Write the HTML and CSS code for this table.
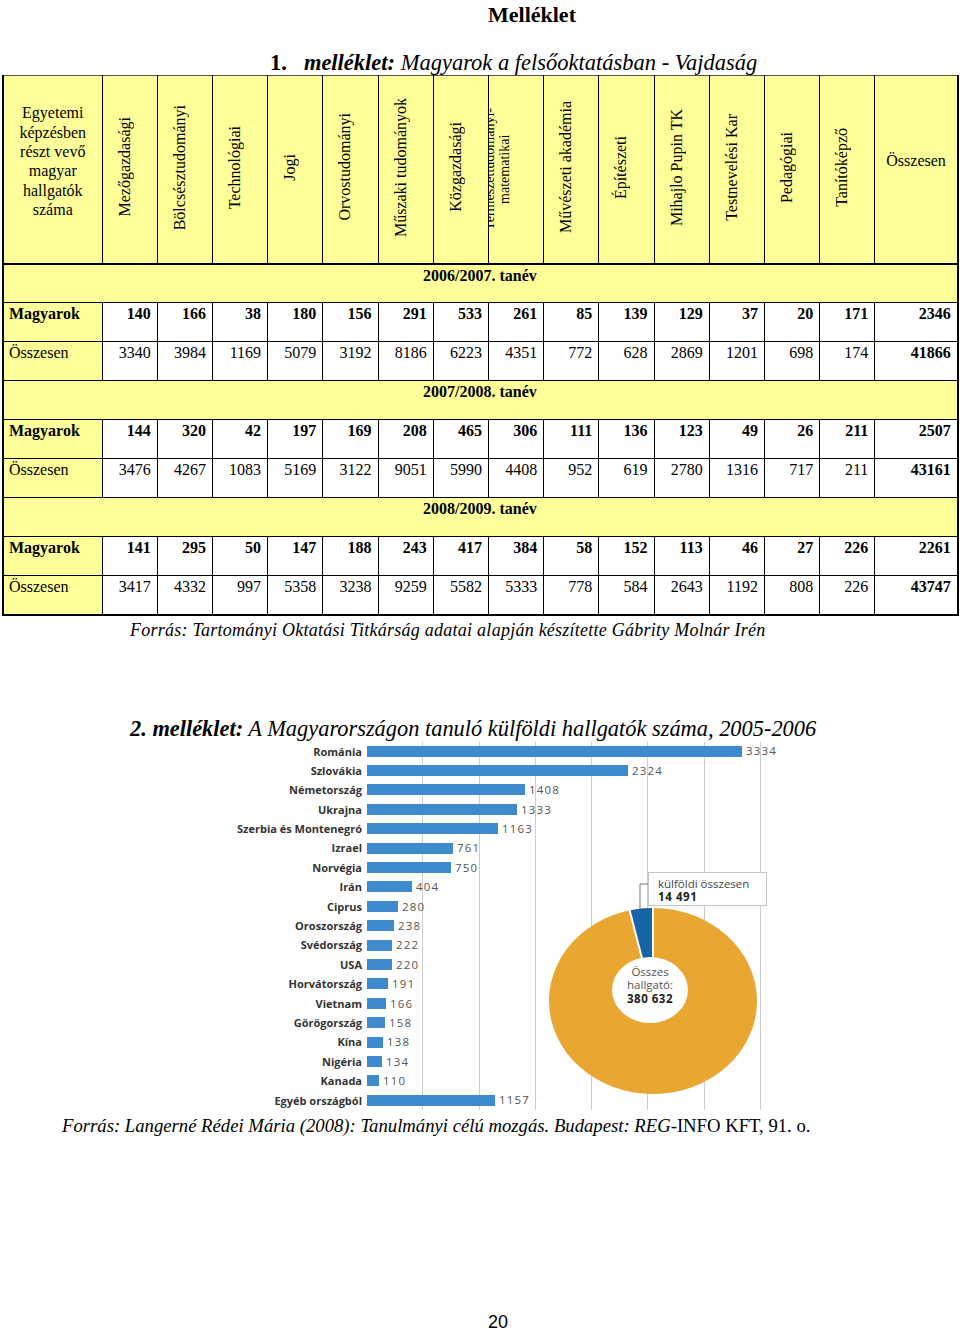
FILE: index.html
```html
<!DOCTYPE html>
<html lang="hu">
<head>
<meta charset="utf-8">
<title>Melléklet</title>
<link rel="stylesheet" href="styles.css">
</head>
<body>
<h1 class="page-title">Melléklet</h1>
<h2 class="annex-title"><span class="num">1.</span><b><i>melléklet:</i></b><i> Magyarok a felsőoktatásban - Vajdaság</i></h2>

<table class="data">
  <colgroup>
    <col class="c-first">
    <col class="c-num"><col class="c-num"><col class="c-num"><col class="c-num"><col class="c-num"><col class="c-num"><col class="c-num">
    <col class="c-num"><col class="c-num"><col class="c-num"><col class="c-num"><col class="c-num"><col class="c-num"><col class="c-num">
    <col class="c-total">
  </colgroup>
  <thead>
    <tr class="hdr">
      <th class="h-first">Egyetemi képzésben részt vevő magyar hallgatók száma</th>
      <th class="vh"><span>Mezőgazdasági</span></th>
      <th class="vh"><span>Bölcsésztudományi</span></th>
      <th class="vh"><span>Technológiai</span></th>
      <th class="vh"><span>Jogi</span></th>
      <th class="vh"><span>Orvostudományi</span></th>
      <th class="vh"><span>Műszaki tudományok</span></th>
      <th class="vh"><span>Közgazdasági</span></th>
      <th class="vh vh-two"><div class="clip"><span>Természettudományi-<br>matematikai</span></div></th>
      <th class="vh"><span>Művészeti akadémia</span></th>
      <th class="vh"><span>Építészeti</span></th>
      <th class="vh"><span>Mihajlo Pupin TK</span></th>
      <th class="vh"><span>Testnevelési Kar</span></th>
      <th class="vh"><span>Pedagógiai</span></th>
      <th class="vh"><span>Tanítóképző</span></th>
      <th class="h-total">Összesen</th>
    </tr>
  </thead>
  <tbody>
    <tr class="year"><td colspan="16">2006/2007. tanév</td></tr>
    <tr class="mag"><th>Magyarok</th><td>140</td><td>166</td><td>38</td><td>180</td><td>156</td><td>291</td><td>533</td><td>261</td><td>85</td><td>139</td><td>129</td><td>37</td><td>20</td><td>171</td><td>2346</td></tr>
    <tr class="tot"><th>Összesen</th><td>3340</td><td>3984</td><td>1169</td><td>5079</td><td>3192</td><td>8186</td><td>6223</td><td>4351</td><td>772</td><td>628</td><td>2869</td><td>1201</td><td>698</td><td>174</td><td class="sum">41866</td></tr>
    <tr class="year"><td colspan="16">2007/2008. tanév</td></tr>
    <tr class="mag"><th>Magyarok</th><td>144</td><td>320</td><td>42</td><td>197</td><td>169</td><td>208</td><td>465</td><td>306</td><td>111</td><td>136</td><td>123</td><td>49</td><td>26</td><td>211</td><td>2507</td></tr>
    <tr class="tot"><th>Összesen</th><td>3476</td><td>4267</td><td>1083</td><td>5169</td><td>3122</td><td>9051</td><td>5990</td><td>4408</td><td>952</td><td>619</td><td>2780</td><td>1316</td><td>717</td><td>211</td><td class="sum">43161</td></tr>
    <tr class="year"><td colspan="16">2008/2009. tanév</td></tr>
    <tr class="mag"><th>Magyarok</th><td>141</td><td>295</td><td>50</td><td>147</td><td>188</td><td>243</td><td>417</td><td>384</td><td>58</td><td>152</td><td>113</td><td>46</td><td>27</td><td>226</td><td>2261</td></tr>
    <tr class="tot"><th>Összesen</th><td>3417</td><td>4332</td><td>997</td><td>5358</td><td>3238</td><td>9259</td><td>5582</td><td>5333</td><td>778</td><td>584</td><td>2643</td><td>1192</td><td>808</td><td class="mark">226</td><td class="sum">43747</td></tr>
  </tbody>
</table>

<p class="source source-1">Forrás: Tartományi Oktatási Titkárság adatai alapján készítette Gábrity Molnár Irén</p>

<h2 class="annex-title-2"><b><i>2. melléklet:</i></b><i> A Magyarországon tanuló külföldi hallgatók száma, 2005-2006</i></h2>

<div class="chart">
  <div class="rows">
    <div class="lbl">Románia</div><div class="bar-cell"><div class="bar" style="width:375px"></div><span class="val">3334</span></div>
    <div class="lbl">Szlovákia</div><div class="bar-cell"><div class="bar" style="width:261px"></div><span class="val">2324</span></div>
    <div class="lbl">Németország</div><div class="bar-cell"><div class="bar" style="width:158px"></div><span class="val">1408</span></div>
    <div class="lbl">Ukrajna</div><div class="bar-cell"><div class="bar" style="width:150px"></div><span class="val">1333</span></div>
    <div class="lbl">Szerbia és Montenegró</div><div class="bar-cell"><div class="bar" style="width:131px"></div><span class="val">1163</span></div>
    <div class="lbl">Izrael</div><div class="bar-cell"><div class="bar" style="width:86px"></div><span class="val">761</span></div>
    <div class="lbl">Norvégia</div><div class="bar-cell"><div class="bar" style="width:84px"></div><span class="val">750</span></div>
    <div class="lbl">Irán</div><div class="bar-cell"><div class="bar" style="width:45px"></div><span class="val">404</span></div>
    <div class="lbl">Ciprus</div><div class="bar-cell"><div class="bar" style="width:31px"></div><span class="val">280</span></div>
    <div class="lbl">Oroszország</div><div class="bar-cell"><div class="bar" style="width:27px"></div><span class="val">238</span></div>
    <div class="lbl">Svédország</div><div class="bar-cell"><div class="bar" style="width:25px"></div><span class="val">222</span></div>
    <div class="lbl">USA</div><div class="bar-cell"><div class="bar" style="width:25px"></div><span class="val">220</span></div>
    <div class="lbl">Horvátország</div><div class="bar-cell"><div class="bar" style="width:21px"></div><span class="val">191</span></div>
    <div class="lbl">Vietnam</div><div class="bar-cell"><div class="bar" style="width:19px"></div><span class="val">166</span></div>
    <div class="lbl">Görögország</div><div class="bar-cell"><div class="bar" style="width:18px"></div><span class="val">158</span></div>
    <div class="lbl">Kína</div><div class="bar-cell"><div class="bar" style="width:16px"></div><span class="val">138</span></div>
    <div class="lbl">Nigéria</div><div class="bar-cell"><div class="bar" style="width:15px"></div><span class="val">134</span></div>
    <div class="lbl">Kanada</div><div class="bar-cell"><div class="bar" style="width:12px"></div><span class="val">110</span></div>
    <div class="lbl">Egyéb országból</div><div class="bar-cell"><div class="bar" style="width:128px"></div><span class="val">1157</span></div>
  </div>
  <svg class="donut" width="240" height="245" viewBox="0 0 240 245" xmlns="http://www.w3.org/2000/svg">
    <ellipse cx="113" cy="139" rx="104" ry="93" fill="#e9a631"/>
    <path d="M113 139 L113 46 A104 93 0 0 0 89.6 48.4 Z" fill="#1764a8"/>
    <line x1="113" y1="139" x2="113" y2="44" stroke="#fff" stroke-width="2"/>
    <line x1="113" y1="139" x2="89" y2="46" stroke="#fff" stroke-width="2"/>
    <ellipse cx="110" cy="128" rx="38" ry="33" fill="#fff"/>
    <polyline points="100,47 100,22 108,22" fill="none" stroke="#777" stroke-width="1"/>
    <rect x="108.5" y="10.5" width="118" height="33" fill="#fff" stroke="#c4c4c4" stroke-width="1"/>
    <text x="118" y="26" class="box-t">külföldi összesen</text>
    <text x="118" y="39" class="box-b">14 491</text>
    <text x="110" y="114" class="in-t">Összes</text>
    <text x="110" y="127" class="in-t">hallgató:</text>
    <text x="110" y="141" class="in-b">380 632</text>
  </svg>
</div>

<p class="source source-2"><i>Forrás: Langerné Rédei Mária (2008): Tanulmányi célú mozgás. Budapest: REG</i>-INFO KFT, 91. o.</p>

<div class="page-num">20</div>
</body>
</html>
```

FILE: styles.css
```css
* { box-sizing: border-box; }
html, body { margin: 0; padding: 0; background: #fff; }
body {
  width: 960px;
  height: 1331px;
  overflow: hidden;
  font-family: "Liberation Serif", "Times New Roman", serif;
  color: #000;
}

.page-title {
  margin: 0;
  height: 51px;
  padding: 2px 0 0 488px;
  font-size: 22px;
  line-height: 25px;
  font-weight: bold;
}

.annex-title {
  margin: 0;
  height: 24px;
  padding-left: 270px;
  font-size: 22.5px;
  line-height: 24px;
  font-weight: normal;
  white-space: nowrap;
}
.annex-title .num { font-weight: bold; margin-right: 17px; }

/* ---------- table ---------- */
table.data {
  border-collapse: collapse;
  table-layout: fixed;
  width: 955px;
  margin-left: 2px;
  border-left: 2px solid #000;
  border-right: 2px solid #000;
  border-bottom: 2px solid #000;
}
col.c-first { width: 99px; }
col.c-num { width: 55.21px; }
col.c-total { width: 83px; }

table.data th,
table.data td {
  border: 1px solid #000;
  padding: 2px 6px 0 5px;
  vertical-align: top;
  font-size: 16px;
  line-height: 18px;
}

tr.hdr th {
  height: 188px;
  background: #ffff99;
  font-weight: normal;
  vertical-align: middle;
  text-align: center;
  border-top: 1px solid #555;
  border-bottom: 2px solid #000;
}
tr.hdr th.h-first { line-height: 19.3px; padding: 0 3px 16px; }
tr.hdr th.h-total { padding: 0 2px 16px; }
tr.hdr th.vh { padding: 0 10px 0 0; }
.vh span {
  display: inline-block;
  writing-mode: vertical-rl;
  transform: rotate(180deg);
  white-space: nowrap;
  line-height: 18px;
}
.vh-two .clip {
  width: 100%;
  height: 186px;
  overflow: hidden;
  display: flex;
  align-items: center;
  justify-content: flex-start;
}
.vh-two .clip span {
  font-size: 14px;
  line-height: 15px;
  text-align: center;
  margin-left: -7px;
}
tr.hdr th.vh-two { padding: 0; }

tr.year td {
  height: 39px;
  background: #ffff99;
  text-align: center;
  font-weight: bold;
  padding-top: 2px;
}
tr.mag td, tr.mag th, tr.tot td, tr.tot th { height: 39px; }
tr.mag th, tr.tot th {
  background: #ffff99;
  text-align: left;
  padding-left: 5px;
}
tr.mag th { font-weight: bold; }
tr.tot th { font-weight: normal; }
tr.mag td, tr.tot td { text-align: right; background: #fff; }
tr.mag td { font-weight: bold; }
td.sum { font-weight: bold; }
td.mark { border-top: 2px solid #000; }

/* ---------- sources ---------- */
.source { margin: 0; white-space: nowrap; }
.source-1 {
  margin-top: 4px;
  padding-left: 130px;
  font-size: 18px;
  line-height: 21px;
  font-style: italic;
  letter-spacing: 0.25px;
}
.annex-title-2 {
  margin: 74px 0 0;
  padding-left: 130px;
  height: 27px;
  font-size: 22.4px;
  line-height: 27px;
  font-weight: normal;
  white-space: nowrap;
}
.source-2 {
  margin-top: 5px;
  padding-left: 62px;
  font-size: 18.7px;
  line-height: 22px;
}

/* ---------- chart ---------- */
.chart {
  position: relative;
  width: 960px;
  height: 368.6px;
  background-image: repeating-linear-gradient(to right, transparent 0, transparent 55.25px, #cdcdcd 55.25px, #cdcdcd 56.25px);
  background-size: 394px 100%;
  background-position: 367px 0;
  background-repeat: no-repeat;
}
.rows {
  display: grid;
  grid-template-columns: 362px 1fr;
  grid-auto-rows: 19.4px;
  column-gap: 5px;
}
.lbl {
  font-family: "Open Sans", "DejaVu Sans", sans-serif;
  font-weight: bold;
  font-size: 11px;
  color: #333;
  text-align: right;
  line-height: 19.4px;
  white-space: nowrap;
}
.bar-cell {
  display: flex;
  align-items: center;
  gap: 4px;
}
.bar {
  height: 11px;
  background: #3d8bcc;
  flex: none;
}
.val {
  font-family: "Open Sans", "DejaVu Sans", sans-serif;
  font-size: 11.5px;
  letter-spacing: 1.2px;
  color: #555;
  line-height: 1;
}
.donut {
  position: absolute;
  left: 540px;
  top: 120px;
}
.donut text { font-family: "Open Sans", "DejaVu Sans", sans-serif; }
.box-t { font-size: 11.5px; fill: #444; }
.box-b { font-size: 11.5px; font-weight: bold; fill: #222; letter-spacing: 0.6px; }
.in-t { font-size: 11.5px; fill: #555; text-anchor: middle; }
.in-b { font-size: 11.5px; font-weight: bold; fill: #222; text-anchor: middle; letter-spacing: 0.5px; }

/* ---------- page number ---------- */
.page-num {
  margin-top: 175px;
  text-align: center;
  padding-left: 36px;
  font-family: "Liberation Sans", Arial, sans-serif;
  font-size: 18px;
  line-height: 20px;
}
```
